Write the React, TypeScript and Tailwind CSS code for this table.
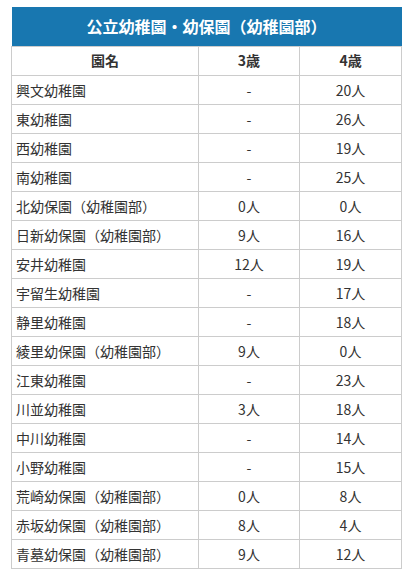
const rows: [string, string, string][] = [
  ['興文幼稚園', '-', '20人'],
  ['東幼稚園', '-', '26人'],
  ['西幼稚園', '-', '19人'],
  ['南幼稚園', '-', '25人'],
  ['北幼保園（幼稚園部）', '0人', '0人'],
  ['日新幼保園（幼稚園部）', '9人', '16人'],
  ['安井幼稚園', '12人', '19人'],
  ['宇留生幼稚園', '-', '17人'],
  ['静里幼稚園', '-', '18人'],
  ['綾里幼保園（幼稚園部）', '9人', '0人'],
  ['江東幼稚園', '-', '23人'],
  ['川並幼稚園', '3人', '18人'],
  ['中川幼稚園', '-', '14人'],
  ['小野幼稚園', '-', '15人'],
  ['荒崎幼保園（幼稚園部）', '0人', '8人'],
  ['赤坂幼保園（幼稚園部）', '8人', '4人'],
  ['青墓幼保園（幼稚園部）', '9人', '12人'],
]

export default function App() {
  return (
    <div className="bg-white px-[11px] pt-[7px] font-['Noto_Sans_CJK_JP',sans-serif] text-[14px] text-[#333]">
      <table className="w-[390px] table-fixed border-collapse">
        <colgroup>
          <col className="w-[187px]" />
          <col className="w-[101px]" />
          <col className="w-[102px]" />
        </colgroup>
        <thead>
          <tr>
            <th
              colSpan={3}
              className="h-[39px] bg-[#1877b0] text-center text-[16px] font-bold text-white"
            >
              公立幼稚園・幼保園（幼稚園部）
            </th>
          </tr>
          <tr>
            <th className="h-[29px] border border-[#ccc] text-center font-bold">園名</th>
            <th className="h-[29px] border border-[#ccc] text-center font-bold">3歳</th>
            <th className="h-[29px] border border-[#ccc] text-center font-bold">4歳</th>
          </tr>
        </thead>
        <tbody>
          {rows.map(([name, a, b]) => (
            <tr key={name}>
              <td className="h-[29px] border border-[#ccc] px-[4px] leading-none">{name}</td>
              <td className="h-[29px] border border-[#ccc] text-center leading-none">{a}</td>
              <td className="h-[29px] border border-[#ccc] text-center leading-none">{b}</td>
            </tr>
          ))}
        </tbody>
      </table>
    </div>
  )
}
